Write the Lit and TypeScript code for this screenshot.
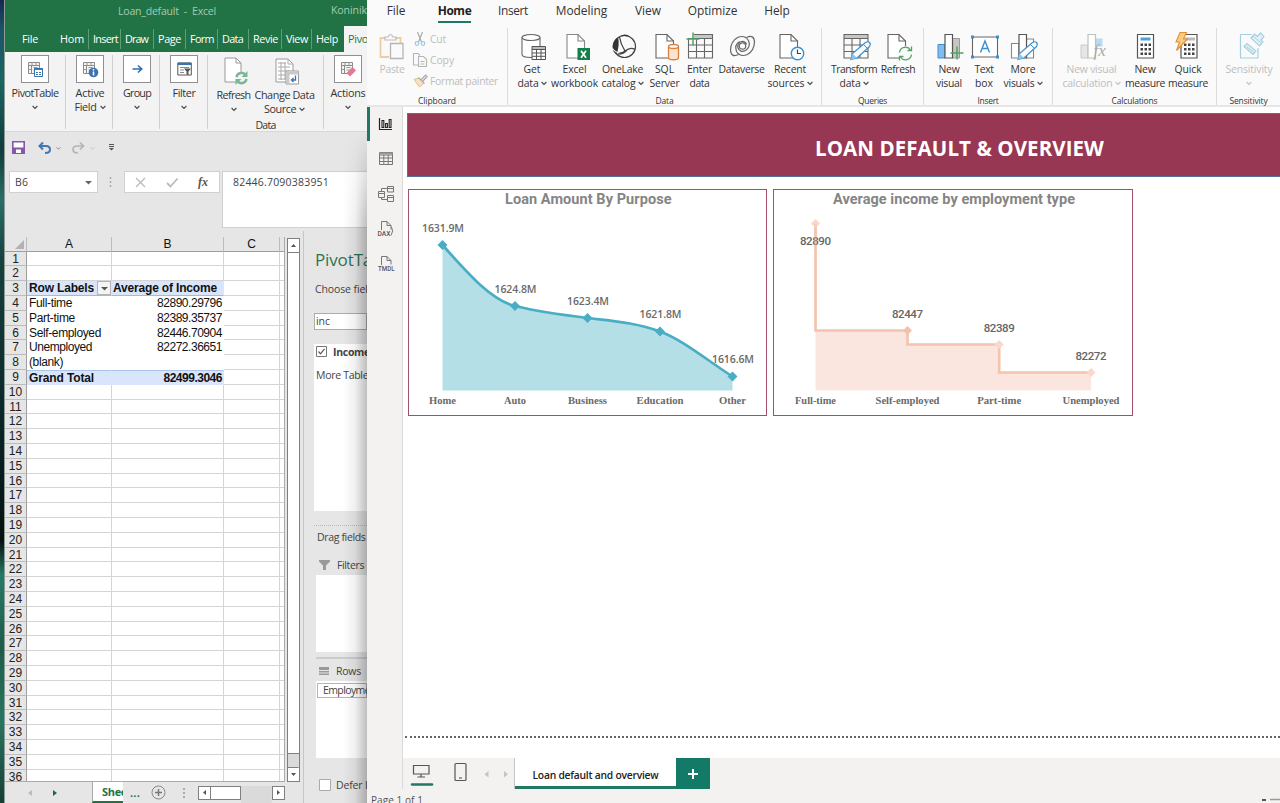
import { LitElement, html, svg, css, nothing } from "lit";
import { customElement, property } from "lit/decorators.js";

/** Inline label whose tracking is tuned so that the text spans a given width. */
@customElement("fit-text")
class FitText extends LitElement {
  @property({ type: Number }) w = 0;
  static styles = css`
    :host { display: inline-block; white-space: pre; flex: none; }
  `;
  firstUpdated() {
    const n = (this.textContent || "").length;
    if (!this.w || !n) return;
    const natural = this.getBoundingClientRect().width;
    const gap = (this.w - natural) / n;
    this.style.letterSpacing = gap.toFixed(3) + "px";
  }
  render() { return html`<slot></slot>`; }
}

const fit = (t: string, w: number) => html`<fit-text .w=${w}>${t}</fit-text>`;
const chev = (s = 6) => html`<svg class="chev" width=${s} height="5" viewBox="0 0 6 5"><path d="M.6 1 3 3.4 5.4 1" fill="none" stroke="currentColor" stroke-width="1.1"/></svg>`;

const doc = (x: number, c = "#666") => svg`<path d="M${x} 1.500h11l6.500 6.500v17H${x}z" fill="#fff" stroke=${c} stroke-width="1.100"/><path d="M${x + 11} 1.500V8h6.500" fill="none" stroke=${c} stroke-width="1.100"/>`;
const gridIc = (x: number) => svg`<path d="M${x} 1.500h24v4h-24z" fill="#c8c6c4"/><path d="M${x} 1.500h24v23.500h-24zM${x} 5.500h24M${x} 12h24M${x} 18.500h24M${x + 8} 5.500V25M${x + 16} 5.500V25" fill="none" stroke="#666" stroke-width="1.100"/>`;
const pencil = (x: number) => svg`<path d="M${x} 26.500l1.500-6L${x + 14.5} 9.500q2.500-1.500 4 0t0 4L${x + 6} 25z" fill="#fafafa" stroke="#3a8fd0" stroke-width="1.200"/><path d="M${x} 26.500l1.500-6 4.500 4.500z" fill="#8cc4ee"/><path d="M${x + 12.5} 11.500l4 4" stroke="#3a8fd0"/>`;
const cyc = (x: number, y: number, c: string) => svg`<g fill="none" stroke=${c} stroke-width="1.300"><path d="M${x - 6} ${y - 1}a6 6 0 0 1 11-2.500M${x + 6} ${y + 1}a6 6 0 0 1-11 2.500"/><path d="M${x + 6} ${y - 7}v4h-4M${x - 6} ${y + 7}v-4h4"/></g>`;
const calc = (x: number) => svg`<path d="M${x} 1.500h16v23.500h-16z" fill="#fff" stroke="#555" stroke-width="1.200"/><path d="M${x + 3} 10.500h2.500v2.500h-2.500zm4 0h2.500v2.500h-2.500zm4 0h2.500v2.500h-2.500zm-8 4.500h2.500v2.500h-2.500zm4 0h2.500v2.500h-2.500zm4 0h2.500v2.500h-2.500zm-8 4.500h2.500v2.500h-2.500zm4 0h2.500v2.500h-2.500zm4 0h2.500v2.500h-2.500z" fill="#444"/>`;
const plus = (x: number, y: number) => svg`<path d="M${x} ${y - 6.5}v13M${x - 6.5} ${y}h13" stroke="#4ca564" stroke-width="1.500"/>`;

const icons: Record<string, unknown> = {
  get: svg`<path d="M4 4.500v17c0 4 18 4 18 0v-17" fill="#fff" stroke="#666" stroke-width="1.100"/><ellipse cx="13" cy="4.500" rx="9" ry="3" fill="#fff" stroke="#666" stroke-width="1.100"/><path d="M14 13.500h13.500v13H14z" fill="#fff"/><path d="M14 13.500h13.500v3H14z" fill="#bbb"/><path d="M14 13.500h13.500v13H14zM14 16.500h13.500M14 20h13.500M14 23.300h13.500M18.500 16.500v10M23 16.500v10" fill="none" stroke="#555"/>`,
  excel: svg`${doc(6, "#888")}<path d="M16.500 15H29v12H16.500z" fill="#15804a"/><path d="M20 17.700l5 7m0-7l-5 7" stroke="#fff" stroke-width="1.700"/>`,
  lake: svg`<circle cx="15.500" cy="13.500" r="11" fill="#fafafa" stroke="#444" stroke-width="1.200"/><path d="M11 3.500Q16-.5 21 3.800q-6-1.200-10-.3z" fill="#333"/><path d="M9 4.500q2 7-1.500 17-4-3-4-8.500Q4 7.500 9 4.500z" fill="#333"/><path d="M10.500 4q1 7 5.500 14M4.500 17.500q6 5 11.500.5t10-1.500M9 21q6 0 9-4" fill="none" stroke="#444" stroke-width="1.300"/><path d="M3.500 15.500q3 4 7 4.500" fill="none" stroke="#fafafa" stroke-width="1.200"/>`,
  sql: svg`${doc(5)}<path d="M17.500 13.500v11c0 3 10 3 10 0v-11" fill="#fbe3cf" stroke="#d9813f" stroke-width="1.300"/><ellipse cx="22.500" cy="13.500" rx="5" ry="2" fill="#fff" stroke="#d9813f" stroke-width="1.300"/>`,
  enter: svg`${gridIc(2.5)}<path d="M0 0h8v5H0z" fill="#fafafa"/>${plus(7, 6)}`,
  verse: svg`<g fill="none" stroke="#666" stroke-width="1.200"><path d="M10.500 21.500Q3 25 2.500 17 2.800 8 10 4.200 17 1.800 20.500 7.500 23 14 17.500 17.500 12 20 10 15 9 10 13.500 8.500q4-.5 5 3"/><path d="M18.500 4.500Q26 1 26.500 9 26.200 18 19 21.800 12 24.200 8.500 18.500 6 12 11.500 8.500"/><circle cx="14.500" cy="13" r="3.200"/></g>`,
  recent: svg`${doc(4)}<circle cx="21.500" cy="20.500" r="6.200" fill="#fff" stroke="#3a8fd0" stroke-width="1.400"/><path d="M21.500 16.500v4h3.500" fill="none" stroke="#444" stroke-width="1.200"/>`,
  transform: svg`${gridIc(4)}${pencil(11)}`,
  refresh: svg`${doc(4)}<circle cx="21.500" cy="20.500" r="7.500" fill="#fafafa"/>${cyc(21.5, 20.5, "#4ca564")}`,
  visual: svg`<path d="M3 11.500h7V25H3z" fill="#83bdee" stroke="#3a8fd0"/><path d="M17.500 5.500h7V25h-7z" fill="#c8c6c4" stroke="#999"/><path d="M10 1.500h7.500V25H10z" fill="#fff" stroke="#555" stroke-width="1.200"/>${plus(22, 20)}`,
  textbox: svg`<path d="M2.500 4H27.500V24H2.500z" fill="#fff" stroke="#666" stroke-width="1.100"/><path d="M1 2.500h3v3H1zm25 0h3v3h-3zm-25 20h3v3H1zm25 0h3v3h-3z" fill="#3a8fd0"/><path d="M10.500 19.500 15 8l4.500 11.500M12 15.500h6" fill="none" stroke="#3a8fd0" stroke-width="1.400"/>`,
  more: svg`<path d="M2.500 10.500H10V25H2.500zM17.500 6h7v19h-7z" fill="#fff" stroke="#888" stroke-width="1.100"/><path d="M10 1.500h7.500V25H10z" fill="#fff" stroke="#555" stroke-width="1.200"/>${pencil(9)}`,
  vcalc: svg`<path d="M3 12h7v13H3z" fill="#e8e6e4" stroke="#ccc"/><path d="M17.500 5.500h7v8h-7z" fill="#b9daf3"/><path d="M10 1.500h7.500V25H10z" fill="#fff" stroke="#c0c0c0" stroke-width="1.200"/><text x="15.500" y="23" font-family="Liberation Serif, serif" font-style="italic" font-size="17" fill="#aaa">fx</text>`,
  measure: svg`${calc(6.5)}<path d="M9.500 4.500h10v3h-10z" fill="#4ca0e0"/>`,
  quick: svg`${calc(7)}<path d="M11 4.500h10v3H11z" fill="#bbb"/><path d="M6-.5h6.500L9.500 6h4L2.500 17.500 5.500 9H2z" fill="#f9cd7c" stroke="#e0913a" stroke-width="1.100"/>`,
  sens: svg`<path d="M5.500 1.500h11M23 15v10H5.500V1.500" fill="none" stroke="#a6cfe0" stroke-width="1.200"/><path d="M9 13.500l3-3 9 7.500-3 3.500zM16 5l3.500-4 3 2.500L25.500 0 29 3.500l-3 3.500 2 2-3.500 4z" fill="#e3f1f7" stroke="#a6cfe0" stroke-width="1.200"/><path d="M11.500 13.500l7 5.500M18 3l8 7" stroke="#a6cfe0"/>`,
  paste: svg`<path d="M8 5H2.500v19H11M18 5h4.500v5" fill="none" stroke="#edcf9d" stroke-width="1.800"/><path d="M7 7V4h3q2.500-5 5 0h3v3z" fill="#fafafa" stroke="#bbb" stroke-width="1.200"/><path d="M12.500 10.500h12.500v15H12.500z" fill="#fafafa" stroke="#b5b5b5" stroke-width="1.300"/>`,
};
const icon = (k: string) => html`<svg class="ic" width="28" height="28" viewBox="0 0 28 28">${icons[k]}</svg>`;

type Line = [string, number, boolean?];
type Item = { c: number; k: string; l: Line[]; dim?: boolean };
type Group = { x: number; r: number; cap: string; cw: number; items: Item[] };

const groups: Group[] = [
  { x: 508, r: 821, cap: "Data", cw: 18, items: [
    { c: 532, k: "get", l: [["Get", 17], ["data", 21, true]] },
    { c: 574.5, k: "excel", l: [["Excel", 24], ["workbook", 47]] },
    { c: 622.5, k: "lake", l: [["OneLake", 41], ["catalog", 34, true]] },
    { c: 664.5, k: "sql", l: [["SQL", 19], ["Server", 30]] },
    { c: 699.5, k: "enter", l: [["Enter", 25], ["data", 20]] },
    { c: 741.5, k: "verse", l: [["Dataverse", 46]] },
    { c: 790, k: "recent", l: [["Recent", 32], ["sources", 37, true]] }] },
  { x: 822, r: 923, cap: "Queries", cw: 29, items: [
    { c: 854, k: "transform", l: [["Transform", 46], ["data", 21, true]] },
    { c: 898, k: "refresh", l: [["Refresh", 34.5]] }] },
  { x: 924, r: 1052, cap: "Insert", cw: 21, items: [
    { c: 949, k: "visual", l: [["New", 21], ["visual", 26]] },
    { c: 984, k: "textbox", l: [["Text", 19], ["box", 18]] },
    { c: 1023, k: "more", l: [["More", 25], ["visuals", 31, true]] }] },
  { x: 1053, r: 1216, cap: "Calculations", cw: 46, items: [
    { c: 1091.5, k: "vcalc", dim: true, l: [["New visual", 50], ["calculation", 50, true]] },
    { c: 1145, k: "measure", l: [["New", 21], ["measure", 40]] },
    { c: 1188, k: "quick", l: [["Quick", 27], ["measure", 40]] }] },
  { x: 1217, r: 1280, cap: "Sensitivity", cw: 38, items: [
    { c: 1249, k: "sens", dim: true, l: [["Sensitivity", 47], ["", 0, true]] }] },
];

const place = (c: number, w: number, prev: number) => `margin-left:${c - w / 2 - prev}px`;

const rows: [string, string, string?][] = [
  ["", ""], ["", ""], ["Row Labels", "Average of Income", "h"],
  ["Full-time", "82890.29796"], ["Part-time", "82389.35737"], ["Self-employed", "82446.70904"],
  ["Unemployed", "82272.36651"], ["(blank)", ""], ["Grand Total", "82499.3046", "t"],
];
const widths: Record<string, number> = {
  "Row Labels": 65, "Average of Income": 104, "Full-time": 43, "Part-time": 46, "Self-employed": 72,
  "Unemployed": 63, "(blank)": 34, "Grand Total": 65,
};

@customElement("app-root")
class AppRoot extends LitElement {
  static styles = css`
    :host { display: block; width: 1280px; height: 803px; overflow: hidden; font-family: "Open Sans", "Noto Sans", sans-serif; color: #333; }
    * { box-sizing: border-box; }
    svg { display: block; overflow: visible; flex: none; }
    .desk { display: flex; height: 803px; background: #e6e6e6; }
    .strip { width: 5px; flex: none; background: linear-gradient(#14284e 0, #1c5468 30px, #1a6562 80px, #113c3b 150px, #296e68 200px, #17403f 260px, #0b2426 430px, #06100f 540px, #247a66 575px, #1e5c4a 650px, #287660 720px, #163f35 803px); border-right: 1px solid #8b9a93; }
    .excel { width: 362px; flex: none; display: flex; flex-direction: column; overflow: hidden; position: relative; background: #e6e6e6; }
    .shade { position: absolute; right: 0; top: 131px; bottom: 0; width: 24px; background: linear-gradient(90deg, transparent, rgba(0,0,0,.06) 50%, rgba(0,0,0,.25)); -webkit-mask: linear-gradient(transparent, #000 90px); mask: linear-gradient(transparent, #000 90px); }
    .xtitle { height: 26px; flex: none; display: flex; background: #217346; color: #a5cbb3; font-size: 10.500px; line-height: 23px; padding-left: 113px; }
    .xtitle .user { margin-left: 115px; line-height: 21px; }
    .xtabs { height: 26px; flex: none; display: flex; background: #217346; color: #fff; font-size: 10.800px; line-height: 26px; }
    .xtabs div { flex: none; padding-left: 4px; height: 20px; margin-top: 3px; line-height: 20px; border-left: 1px solid #5f9c79; }
    .xtabs .nb { border-color: transparent; }
    .xtabs .on { background: #f3f3f3; color: #217346; height: 26px; margin-top: 0; line-height: 26px; border: 0; width: 30px; }
    .xrib { height: 80px; flex: none; display: flex; background: #f3f3f3; border-bottom: 1px solid #d8d8d8; font-size: 10.800px; line-height: 14px; color: #333; }
    .xg { flex: none; display: flex; height: 74px; margin-top: 3px; border-right: 1px solid #d0d0d0; position: relative; }
    .xi { width: 30px; flex: none; display: flex; flex-direction: column; align-items: center; white-space: nowrap; }
    .xi .bx { width: 28px; height: 28px; border: 1px solid #909090; background: #fff; display: flex; align-items: center; justify-content: center; margin: 0 0 3px; flex: none; }
    .xi .big { height: 33px; flex: none; padding-top: 2px; }
    .ln { display: flex; align-items: center; justify-content: center; gap: 3px; height: 14px; flex: none; }
    .chev { margin-top: 1px; opacity: .9; }
    .cap { position: absolute; left: 0; right: 0; bottom: -3px; text-align: center; font-size: 10.500px; }
    .qat { height: 39px; flex: none; display: flex; align-items: center; padding: 0 0 8px 7px; }
    .fbar { height: 60px; flex: none; display: flex; align-items: flex-start; font-size: 10.500px; line-height: 21px; color: #444; }
    .nbx { width: 89px; height: 22px; background: #fff; border: 1px solid #d0d0d0; margin-left: 4px; display: flex; justify-content: space-between; align-items: center; padding: 0 5px; flex: none; }
    .fx { width: 96px; height: 22px; background: #fff; border: 1px solid #d0d0d0; margin-left: 5px; display: flex; align-items: center; flex: none; }
    .fval { width: 150px; height: 57px; background: #fff; border: 1px solid #d0d0d0; margin-left: 2px; padding-left: 10px; flex: none; }
    .dots { width: 10px; margin-left: 11px; height: 22px; display: flex; align-items: center; flex: none; }
    .mid { display: flex; flex: 1; min-height: 0; }
    .sheet { width: 298px; flex: none; display: flex; flex-direction: column; padding-top: 6px; }
    .top { display: flex; height: 545px; flex: none; }
    .gridw { width: 280px; overflow: hidden; flex: none; border-right: 1px solid #ababab; border-bottom: 1px solid #ababab; font-family: "Liberation Sans", Arial, sans-serif; font-size: 12px; color: #111; }
    .gr { display: grid; grid-template-columns: 22px 85px 112px 56px 5px; height: 14.810px; line-height: 15.500px; background: #fff; }
    .gr > div { border-right: 1px solid #d4d4d4; border-bottom: 1px solid #d4d4d4; padding: 0 1px 0 2px; white-space: nowrap; position: relative; height: 14.810px; }
    .gr > .n { background: #e6e6e6; border-color: #bcbcbc #9f9f9f #bcbcbc; text-align: center; color: #222; padding: 0; }
    .gr > .v { text-align: right; }
    .gr.data > .a, .gr.data > .v { border-color: transparent; }
    .gr.blue > .a, .gr.blue > .v { background: #d9e5fa; border-color: #d9e5fa; font-weight: bold; }
    .gr.h > .a, .gr.h > .v { border-bottom-color: #9db9e4; }
    .gr.h > .v { text-align: left; padding-left: 1px; }
    .gr.t > .a, .gr.t > .v { border-top: 1px solid #a9c3ea; line-height: 14px; }
    .gr.hd { height: 14.700px; background: #e6e6e6; line-height: 14px; }
    .gr.hd > div { background: #e6e6e6; text-align: center; border-color: #bcbcbc; border-bottom-color: #9f9f9f; padding: 0; }
    .dd { position: absolute; right: 0; top: 0; width: 14px; height: 14px; background: #f4f4f4; border: 1px solid #b4b4b4; display: flex; align-items: center; justify-content: center; }
    .vs { width: 13px; margin: 1px 0 0 2px; display: flex; flex-direction: column; background: #dadada; border: 1px solid #7f7f7f; }
    .vs .b { height: 13px; background: #fff; display: flex; align-items: center; justify-content: center; flex: none; }
    .vs .t { height: 502px; flex: none; background: #fff; border: solid #7f7f7f; border-width: 1px 0; }
    .vs .g { flex: 1; border-bottom: 1px solid #7f7f7f; }
    .tabs { display: flex; flex: 1; align-items: center; font-size: 11px; }
    .tabs .st { width: 31px; height: 21px; background: #fff; border-bottom: 2px solid #217346; border-left: 1px solid #aaa; color: #217346; font-weight: 700; padding-left: 9px; line-height: 20px; overflow: hidden; margin-left: 35px; flex: none; }
    .hs { display: flex; width: 87px; height: 14px; margin-left: 12px; flex: none; }
    .hs .b { width: 13px; border: 1px solid #7f7f7f; background: #fff; display: flex; align-items: center; justify-content: center; }
    .hs .t { width: 30px; border: 1px solid #7f7f7f; border-left: 0; background: #fff; }
    .hs .g { flex: 1; background: #dadada; }
    .pane { width: 64px; flex: none; border-left: 1px solid #c6c6c6; padding-left: 10px; font-size: 10.500px; line-height: 14px; color: #444; white-space: nowrap; display: flex; flex-direction: column; }
    .pane > * { flex: none; }
    .pt { font-size: 17px; line-height: 24px; color: #2c7650; margin: 17px 0 0 1px; font-weight: 400; height: 24px; }
    .ch { margin: 10px 0 0 1px; }
    .inp { height: 17px; margin-top: 17px; border: 1px solid #adadad; background: #fff; padding-left: 1px; line-height: 14px; }
    .list { height: 167px; background: #fff; margin-top: 14px; padding-left: 2px; }
    .list div { display: flex; align-items: center; gap: 6px; height: 15px; font-weight: 700; }
    .list p { margin: 9px 0 0; }
    .area { margin-left: 2px; background: #fff; }
    .row { display: flex; align-items: center; gap: 7px; margin-left: 5px; }

    .pbi { flex: 1; display: flex; flex-direction: column; background: #fafafa; min-width: 0; }
    .menu { height: 28px; display: flex; flex: none; font-size: 11.900px; line-height: 21px; color: #333; }
    .menu div { flex: none; width: 30px; display: flex; justify-content: center; height: 23px; }
    .menu .on span { border-bottom: 2px solid #217864; font-weight: 700; color: #222; height: 23px; }
    .rib { height: 79px; flex: none; display: flex; border-bottom: 2px solid #e6e6e6; font-size: 10.400px; line-height: 14px; color: #333; }
    .g { flex: none; display: flex; position: relative; height: 77px; border-right: 1px solid #dcdcdc; padding-top: 5px; }
    .g:last-child { border-right: 0; }
    .g .cap { font-size: 8.500px; line-height: 11px; bottom: -1px; }
    .it { width: 28px; flex: none; display: flex; flex-direction: column; align-items: center; }
    .it .ic { margin-bottom: 1px; }
    .it .ln { gap: 2px; }
    .dim { color: #bdbdbd; }
    .small { display: flex; flex-direction: column; margin-left: 7px; gap: 7px; color: #bdbdbd; margin-top: -1px; }
    .small div { display: flex; align-items: center; gap: 3px; height: 14px; }
    .body { flex: 1; display: flex; min-height: 0; }
    .side { width: 36px; background: #f3f2f1; border-right: 1px solid #dcdad8; flex: none; display: flex; flex-direction: column; }
    .side div { height: 35px; display: flex; align-items: center; justify-content: center; border-left: 3px solid transparent; padding-right: 1px; }
    .side .on { border-color: #217864; height: 34px; padding-right: 2px; }
    .cv { flex: 1; display: flex; flex-direction: column; background: #fff; min-width: 0; }
    .page { height: 631px; flex: none; margin: 0 0 0 2px; padding: 6px 0 0 2px; border-bottom: 2px dotted #666; }
    .ban { height: 64px; background: #983754; border: 1px solid #53709a; border-right: 0; color: #fff; font-size: 20.500px; font-weight: 700; line-height: 69px; padding-left: 407px; }
    .charts { display: flex; margin-top: 12px; gap: 6px; padding-left: 1px; }
    .card { width: 359px; height: 227px; border: 1px solid #a0506c; flex: none; }
    .card.wide { width: 360px; }
    .bot { height: 32px; margin-top: 20px; flex: none; background: #f3f2f1; display: flex; border-bottom: 1px solid #d8d6d4; }
    .bot .m { width: 112px; border-right: 1px solid #c6c6c6; flex: none; }
    .bot .tab { width: 161px; background: #fff; border-bottom: 3px solid #217864; text-align: center; font-size: 10.300px; font-weight: 600; line-height: 34px; color: #222; flex: none; }
    .bot .add { width: 34px; background: #127a66; display: flex; align-items: center; justify-content: center; flex: none; }
    .stat { height: 14px; flex: none; background: #f3f2f1; font-size: 10px; line-height: 23px; padding-left: 4px; overflow: hidden; color: #555; display: flex; justify-content: space-between; }
  `;

  private line([t, w, c]: Line) { return html`<div class="ln">${t ? fit(t, w) : nothing}${c ? chev() : nothing}</div>`; }

  private excelItem(c: number, prev: number, ic: unknown, lines: Line[], big = false) {
    return html`<div class="xi" style=${place(c, 30, prev)}><div class=${big ? "big" : "bx"}>${ic}</div>${lines.map(l => this.line(l))}</div>`;
  }

  private excelRibbon() {
    const tbl = svg`<path d="M.5.500h11v3H.5zM.5 3.500h3v8h-3zM3.500 3.500h8v8h-8z" fill="#f4f4f4" stroke="#8a8a8a"/><path d="M4 .5v3M8 .5v3M.5 7.500h3M5.500 5.500h4M5.500 8h4" stroke="#999"/>`;
    return html`<div class="xrib">
      <div class="xg" style="width:61px">${this.excelItem(35, 5, html`<svg width="15" height="15" viewBox="0 0 15 15">${tbl}<path d="M6.500 6.500h8v8h-8z" fill="#fff" stroke="#3d72a8"/><path d="M6.500 7.200h8" stroke="#3d72a8" stroke-width="1.500"/><path d="M8 10.500h2m1 0h2M8 12.500h2m1 0h2" stroke="#3d72a8"/></svg>`, [["PivotTable", 47], ["", 0, true]])}</div>
      <div class="xg" style="width:47px">${this.excelItem(90, 66, html`<svg width="15" height="15" viewBox="0 0 15 15">${tbl}<circle cx="10.500" cy="10.500" r="4.800" fill="#3d72b0"/><path d="M10.500 9.500v4M10.500 7v1.500" stroke="#fff" stroke-width="1.500"/></svg>`, [["Active", 29], ["Field", 22, true]])}</div>
      <div class="xg" style="width:47px">${this.excelItem(137, 113, html`<svg width="15" height="15" viewBox="0 0 15 15"><path d="M2.500 7h9M8 3.500 11.700 7 8 10.500" fill="none" stroke="#2f6db0" stroke-width="1.600"/></svg>`, [["Group", 28], ["", 0, true]])}</div>
      <div class="xg" style="width:48px">${this.excelItem(184, 160, html`<svg width="15" height="15" viewBox="0 0 15 15"><path d="M.8 1h13.500v12H.8z" fill="#fff" stroke="#555"/><path d="M.8 1.800h13.500" stroke="#3d72a8" stroke-width="2.500"/><path d="M3 5.500h9M3 8h4M3 10.500h4" stroke="#888"/><path d="M7 6.500h7l-2.500 3v4l-2-1.500V9.500z" fill="#555"/></svg>`, [["Filter", 23], ["", 0, true]])}</div>
      <div class="xg" style="width:116px">
        ${this.excelItem(233.5, 208, html`<svg width="26" height="28" viewBox="0 0 26 28"><path d="M4 1h11l5 5v19H4z" fill="#fff" stroke="#999"/><path d="M15 1v5h5" fill="none" stroke="#999"/><circle cx="20.500" cy="21" r="6.500" fill="#f3f3f3"/><g fill="none" stroke="#7db597" stroke-width="2.500"><path d="M15.500 20a5 5 0 0 1 9-2M25.500 22a5 5 0 0 1-9 2"/></g><path d="M26.500 14v6h-6zM14.500 28v-6h6z" fill="#7db597"/></svg>`, [["Refresh", 34], ["", 0, true]], true)}
        ${this.excelItem(284.5, 248.5, html`<svg width="26" height="28" viewBox="0 0 26 28"><path d="M4 2h12l5 5v18H4z" fill="#fff" stroke="#999"/><path d="M16 2v5h5M6 6h8M6 10h12M6 14h12M6 18h7M6 22h7M9 5v18M13 5v18" fill="none" stroke="#aaa"/><path d="M14 14h12.500v13H14z" fill="#fff" stroke="#999"/><path d="M14.500 14.500h12v3h-12zM14.500 17.500h3v9h-3z" fill="#c9c9c9"/><path d="M23.500 18.500v4.500h-4M21.500 21l-2 2 2 2" fill="none" stroke="#3d72b0" stroke-width="1.300"/></svg>`, [["Change Data", 60], ["Source", 32, true]], true)}
        <div class="cap">${fit("Data", 20)}</div></div>
      <div class="xg" style="width:50px">${this.excelItem(348, 324, html`<svg width="15" height="15" viewBox="0 0 15 15">${tbl}<path d="M5.500 11 11.500 5l3.500 3.500-6 6z" fill="#e8788f"/></svg>`, [["Actions", 35], ["", 0, true]])}</div>
    </div>`;
  }

  private excel() {
    const tabs: [string, number, number][] = [["Hom", 24, 33], ["Insert", 25, 32], ["Draw", 23, 33], ["Page", 23, 32], ["Form", 24, 32], ["Data", 21, 31], ["Revie", 25, 33], ["View", 22, 30], ["Help", 22, 33]];
    const all = Array.from({ length: 36 }, (_, i) => rows[i] || ["", ""]);
    const tri = (d: string, c = "#555") => html`<svg width="7" height="7" viewBox="0 0 7 7"><path d=${d} fill=${c}/></svg>`;
    return html`<div class="excel">
      <div class="xtitle">${fit("Loan_default  -  Excel", 98)}<span class="user">${fit("Koninik", 36)}</span></div>
      <div class="xtabs"><div class="nb" style="width:50px;padding-left:16px">${fit("File", 16)}</div>
        ${tabs.map(([t, w, b], i) => html`<div class=${i ? "" : "nb"} style="width:${b}px">${fit(t, w)}</div>`)}<div class="on">${fit("Pivo", 20)}</div></div>
      ${this.excelRibbon()}
      <div class="qat">
        <svg width="13" height="13" viewBox="0 0 13 13"><path d="M.8.800h11.400v11.400H.8z" fill="#fff" stroke="#8657a8" stroke-width="1.600"/><path d="M1 6.500h11V12H1z" fill="#8657a8"/><path d="M4 8.500h5V12H4z" fill="#fff"/></svg>
        <svg width="13" height="12" viewBox="0 0 13 12" style="margin-left:13px"><path d="M5 .5 1.500 4 5 7.500M2 4h6q4 0 4 3.500T7 11" fill="none" stroke="#3f78b5" stroke-width="2"/></svg><span style="margin-left:5px;color:#777">${chev(5)}</span>
        <svg width="13" height="12" viewBox="0 0 13 12" style="margin-left:11px"><path d="M8 .5 11.500 4 8 7.500M11 4H5Q1 4 1 7.500T6 11" fill="none" stroke="#b4b4b4" stroke-width="1.700"/></svg><span style="margin-left:5px;color:#bbb">${chev(5)}</span>
        <svg width="5" height="7" viewBox="0 0 5 7" style="margin-left:14px"><path d="M0 .5h5M0 2.500h5" stroke="#555"/><path d="M0 4h5L2.500 6.500z" fill="#555"/></svg>
      </div>
      <div class="fbar"><div class="nbx">${fit("B6", 13)}${tri("M0 2h7L3.500 5.500z", "#666")}</div>
        <div class="dots"><svg width="3" height="10" viewBox="0 0 3 10"><path d="M1.500 0v10" stroke="#aaa" stroke-width="1.500" stroke-dasharray="2 2"/></svg></div>
        <div class="fx"><svg width="94" height="20" viewBox="0 0 94 20"><path d="M11 6l9 9m0-9l-9 9" stroke="#bbb" stroke-width="1.300"/><path d="M42 11l3.500 3.500 7-8" fill="none" stroke="#bbb" stroke-width="1.800"/><text x="73" y="14" font-family="Liberation Serif, serif" font-style="italic" font-weight="bold" font-size="13" fill="#555" textLength="10" lengthAdjust="spacingAndGlyphs">fx</text></svg></div>
        <div class="fval">${fit("82446.7090383951", 96)}</div></div>
      <div class="mid">
        <div class="sheet">
          <div class="top">
            <div class="gridw">
              <div class="gr hd"><div><svg width="18" height="13" viewBox="0 0 18 13"><path d="M19 3v9h-9z" fill="#b2b2b2"/></svg></div><div>A</div><div>B</div><div>C</div><div></div></div>
              ${all.map(([a, b, k], i) => html`<div class="gr ${k ? "blue " + k : ""} ${i > 2 && i < 8 ? "data" : ""}">
                <div class="n">${i + 1}</div><div class="a">${a ? fit(a, widths[a]) : nothing}${k === "h" ? html`<span class="dd">${tri("M0 2h7L3.500 5.500z")}</span>` : nothing}</div>
                <div class="v">${b ? fit(b, widths[b] || (k ? 58.5 : 65)) : nothing}</div><div></div><div></div></div>`)}
            </div>
            <div class="vs"><div class="b">${tri("M1 5h5L3.500 2z")}</div><div class="t"></div><div class="g"></div><div class="b">${tri("M1 2h5L3.500 5z")}</div></div>
          </div>
          <div class="tabs"><svg width="52" height="8" viewBox="0 0 52 8"><path d="M27 1v6l-4-3z" fill="#bbb"/><path d="M48 1v6l4-3z" fill="#1c6b40"/></svg>
            <div class="st">${fit("Shee", 25)}</div><span style="color:#217346;font-weight:700;margin-left:7px;width:11px">${fit("...", 10)}</span>
            <svg width="15" height="15" viewBox="0 0 15 15" style="margin-left:10px"><circle cx="7.500" cy="7.500" r="6.500" fill="none" stroke="#888"/><path d="M7.500 4v7M4 7.500h7" stroke="#777" stroke-width="1.500"/></svg>
            <svg width="3" height="10" viewBox="0 0 3 10" style="margin-left:17px"><path d="M1 0v10" stroke="#999" stroke-width="1.500" stroke-dasharray="2 2"/></svg>
            <div class="hs"><div class="b">${tri("M5 1v5L2 3.500z")}</div><div class="t"></div><div class="g"></div><div class="b">${tri("M2 1v5l3-2.500z")}</div></div></div>
        </div>
        <div class="pane">
          <div class="pt">${fit("PivotTable", 81)}</div><div class="ch">${fit("Choose fields", 64)}</div>
          <div class="inp">${fit("inc", 14)}</div>
          <div class="list"><div><svg width="11" height="11" viewBox="0 0 11 11"><path d="M.5.500h10v10H.5z" fill="#fff" stroke="#777"/><path d="M2.500 5.500l2 2.300 4-5" fill="none" stroke="#555" stroke-width="1.200"/></svg>${fit("Income", 37)}</div><p>${fit("More Tables", 57)}</p></div>
          <div style="margin:14px 0 0 0;border-top:1px dotted #bbb;padding:4px 0 0 3px">${fit("Drag fields", 48.5)}</div>
          <div class="row" style="margin-top:14px"><svg width="11" height="10" viewBox="0 0 11 10"><path d="M0 0h11v1.500L7 5.500V10H4V5.500L0 1.500z" fill="#999"/></svg>${fit("Filters", 27)}</div>
          <div class="area" style="height:77px;margin-top:3px"></div>
          <div style="border-top:2px solid #ccc;margin:5px 0 0 2px"></div>
          <div class="row" style="margin-top:5px"><svg width="10" height="9" viewBox="0 0 10 9"><path d="M0 0h10v3H0zM0 4h10v1.500H0zM0 6.500h10V8H0z" fill="#999"/></svg>${fit("Rows", 25)}</div>
          <div class="area" style="height:77px;margin-top:3px;padding:2px 0 0 1px"><div style="border:1px solid #b5b5b5;height:15px;line-height:12px;padding-left:5px">${fit("Employment", 56)}</div></div>
          <div class="row" style="margin:20px 0 0 5px;gap:5px"><svg width="12" height="12" viewBox="0 0 12 12"><path d="M.5.500h11v11H.5z" fill="#fff" stroke="#aaa"/></svg>${fit("Defer Layout", 61)}</div>
        </div>
      </div>
      <div class="shade"></div>
    </div>`;
  }

  private ribbon() {
    return html`<div class="rib">
      <div class="g dim" style="width:141px">
        <div class="it" style="margin-left:11px">${icon("paste")}${this.line(["Paste", 25])}</div>
        <div class="small">
          <div><svg width="14" height="14" viewBox="0 0 14 14"><path d="M4.500 0l4 10M9.500 0l-4 10" stroke="#aaa" stroke-width="1.200"/><circle cx="4" cy="11.500" r="1.800" fill="none" stroke="#9fc8e0" stroke-width="1.200"/><circle cx="10" cy="11.500" r="1.800" fill="none" stroke="#9fc8e0" stroke-width="1.200"/></svg>${fit("Cut", 16)}</div>
          <div><svg width="14" height="14" viewBox="0 0 14 14"><path d="M5 12H.5V.500H5L7 2.500M5.500 3.500h5l3 3v7h-8zM7.500 8.500h4M7.500 11h4" fill="none" stroke="#b5b5b5" stroke-width="1.100"/></svg>${fit("Copy", 24)}</div>
          <div><svg width="14" height="14" viewBox="0 0 14 14"><path d="M1 5.500l5-1.500 5 5-4.500 4z" fill="#f6e2c2" stroke="#dfc08c"/><path d="M5.500 3.500l6 6M8.500 5.500 12.500 1l1.500 1.500-4 4.500" fill="none" stroke="#aaa" stroke-width="1.200"/></svg>${fit("Format painter", 68)}</div>
        </div>
        <div class="cap" style="color:#333">${fit("Clipboard", 38)}</div>
      </div>
      ${groups.map(g => { let prev = g.x; return html`<div class="g" style="width:${g.r - g.x + (g.r < 1280 ? 1 : 0)}px">
        ${g.items.map(i => { const p = prev; prev = i.c + 14; return html`<div class="it ${i.dim ? "dim" : ""}" style=${place(i.c, 28, p)}>${icon(i.k)}${i.l.map(l => this.line(l))}</div>`; })}
        <div class="cap">${fit(g.cap, g.cw)}</div></div>`; })}
    </div>`;
  }

  private loanChart() {
    const pts: [string, string, number, number][] = [["Home", "1631.9M", 442.5, 245], ["Auto", "1624.8M", 515, 306], ["Business", "1623.4M", 587.5, 318], ["Education", "1621.8M", 660, 331.5], ["Other", "1616.6M", 732.5, 376.5]];
    const lw = [27, 22, 39, 47, 27];
    const curve = "M442.500 245C466 271 490 300 515 306S563 315 587.500 318S636 322.500 660 331.500S708 361 732.500 376.500";
    return html`<svg width="357" height="225" viewBox="409 190 357 225">
      <text x="505" y="204" font-family="Roboto, sans-serif" font-weight="700" font-size="14.500" fill="#858585" textLength="166.500">Loan Amount By Purpose</text>
      <path d="${curve}V390.500H442.500z" fill="#b4dfe7"/><path d=${curve} fill="none" stroke="#49adc3" stroke-width="2.700"/>
      ${pts.map(([n, v, x, y], i) => svg`<path d="M${x} ${y - 5}l5 5-5 5-5-5z" fill="#49adc3"/>
        <text x=${x - 20.5} y=${y - 13.3} font-family="Open Sans, sans-serif" font-weight="600" font-size="10.500" fill="#6a6a6a" textLength="42">${v}</text>
        <text x=${x - lw[i] / 2} y="404" font-family="Liberation Serif, serif" font-weight="700" font-size="11.300" fill="#6a6a6a" textLength=${lw[i]} lengthAdjust="spacingAndGlyphs">${n}</text>`)}
    </svg>`;
  }

  private incomeChart() {
    const pts: [string, string, number, number, number, number][] = [["Full-time", "82890", 815.5, 223.5, 245, 41], ["Self-employed", "82447", 907.5, 330.5, 317.5, 64], ["Part-time", "82389", 999.2, 344.5, 331.5, 44], ["Unemployed", "82272", 1091, 372.5, 359.5, 57]];
    return html`<svg width="358" height="225" viewBox="774 190 358 225">
      <text x="833" y="204" font-family="Roboto, sans-serif" font-weight="700" font-size="14.500" fill="#858585" textLength="242">Average income by employment type</text>
      <path d="M815.500 330.500h92v14h91.700v28H1091v18H815.500z" fill="#fae5df"/>
      <path d="M815.500 223.500v107h92v14h91.700v28H1091" fill="none" stroke="#f4c4ae" stroke-width="2.700"/>
      ${pts.map(([n, v, x, y, ty, w], i) => svg`<path d="M${x} ${y - 4.5}l4.500 4.500-4.500 4.500-4.500-4.500z" fill=${i === 1 ? "#f4c0a8" : "#fad7cb"}/>
        <text x=${x - 15.5} y=${ty} font-family="Roboto, sans-serif" font-weight="500" font-size="11.500" fill="#666" textLength="31">${v}</text>
        <text x=${x - w / 2} y="404" font-family="Liberation Serif, serif" font-weight="700" font-size="11.300" fill="#6a6a6a" textLength=${w} lengthAdjust="spacingAndGlyphs">${n}</text>`)}
      <path d="M815.500 223.500v24" stroke="#f4c4ae" stroke-width="2.700" opacity=".4"/>
    </svg>`;
  }

  render() {
    const menu: [string, number, number][] = [["File", 396, 18.5], ["Home", 454.5, 33.5], ["Insert", 513, 30], ["Modeling", 581.5, 51.5], ["View", 648, 26], ["Optimize", 712.5, 49.5], ["Help", 777, 25.5]];
    let px = 367;
    const s = (b: unknown) => html`<svg width="16" height="16" viewBox="0 0 16 16">${b}</svg>`;
    const sdoc = (t: string, x: number, len: number, curl: unknown = nothing) => s(svg`<path d="M3.500 9V.500h5.500L13 4.500v4M9 .500v4h4" fill="none" stroke="#777"/>${curl}<text x=${x} y="14.500" font-family="Roboto, sans-serif" font-weight="500" font-size="6.500" fill="#555" textLength=${len} lengthAdjust="spacingAndGlyphs">${t}</text>`);
    return html`<div class="desk"><div class="strip"></div>${this.excel()}
      <div class="pbi">
        <div class="menu">${menu.map(([t, c, w]) => { const p = px; px = c + 15; return html`<div class=${t === "Home" ? "on" : ""} style=${place(c, 30, p)}><span>${fit(t, w)}</span></div>`; })}</div>
        ${this.ribbon()}
        <div class="body">
          <div class="side">
            <div class="on">${s(svg`<path d="M2.500 2v11.500H15" fill="none" stroke="#222" stroke-width="1.200"/><path d="M5 4.500h1.800v7H5zM8.600 7.500h1.800v4H8.600zM12.200 3.500h1.800v8h-1.800z" fill="#f3f2f1" stroke="#222" stroke-width="1.100"/>`)}</div>
            <div>${s(svg`<path d="M1.500 1.500h13v12h-13zM1.500 4h13M1.500 7h13M1.500 10.500h13M5.800 4V13.500M10.200 4V13.500" fill="none" stroke="#777"/><path d="M1.500 1.500h13v2h-13z" fill="#999"/>`)}</div>
            <div>${s(svg`<path d="M.5 5.500h6v6h-6zM9.500.500h6v5.500h-6zM9.500 9.500h6v6h-6zM.5 7.500h6M9.500 2.500h6M9.500 11.500h6M3.500 5.500V2.500h6M3.500 11.500v2h6" fill="none" stroke="#777"/>`)}</div>
            <div>${sdoc("DAX", -0.5, 13, svg`<path d="M13.500 6q2.500 4-.5 8.500" fill="none" stroke="#777"/>`)}</div><div>${sdoc("TMDL", 0, 16.5)}</div>
          </div>
          <div class="cv">
            <div class="page"><div class="ban">${fit("LOAN DEFAULT & OVERVIEW", 289)}</div>
              <div class="charts"><div class="card">${this.loanChart()}</div><div class="card wide">${this.incomeChart()}</div></div></div>
            <div class="bot"><div class="m"><svg width="110" height="31" viewBox="403 758 110 31"><path d="M413.500 765.500h15.500v8.500h-15.500zM421 774v3M417.500 777h7.500" fill="none" stroke="#555" stroke-width="1.200"/><path d="M412 784.500h20" stroke="#217864" stroke-width="2.500" stroke-linecap="round"/><rect x="455" y="763.500" width="11" height="17" rx="1" fill="none" stroke="#555" stroke-width="1.200"/><path d="M459 778h3" stroke="#444"/><path d="M488.500 771v6.500l-4-3.200zM504 771v6.500l4-3.200z" fill="#c4c4c4"/></svg></div>
              <div class="tab">${fit("Loan default and overview", 126)}</div>
              <div class="add"><svg width="10" height="10" viewBox="0 0 10 10"><path d="M5 0v10M0 5h10" stroke="#fff" stroke-width="2"/></svg></div></div>
          </div>
        </div>
        <div class="stat">${fit("Page 1 of 1", 52)}<svg width="20" height="14" viewBox="0 0 20 14"><path d="M2 11h4" stroke="#555" stroke-width="2"/><path d="M10 10.500h10" stroke="#999" stroke-width="1.500"/></svg></div>
      </div>
    </div>`;
  }
}
